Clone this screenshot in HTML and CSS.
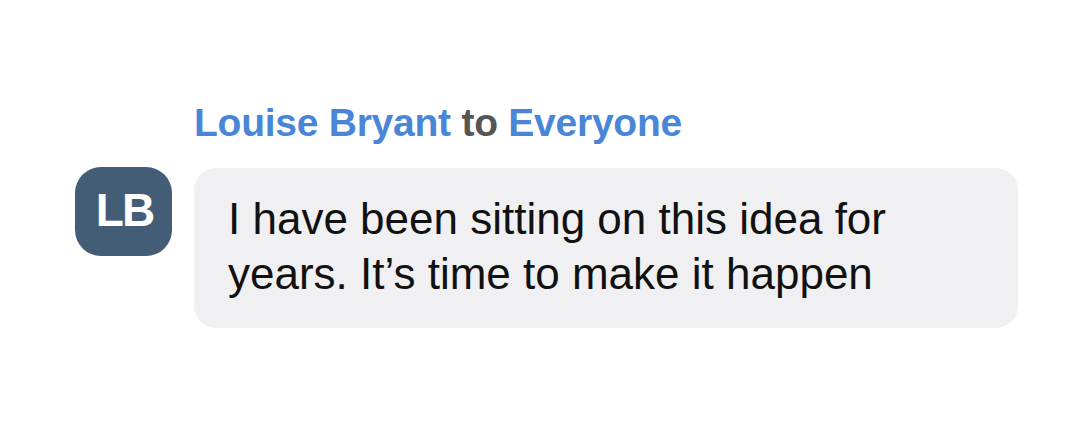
FILE: index.html
```html
<!DOCTYPE html>
<html>
<head>
<meta charset="utf-8">
<link rel="stylesheet" href="styles.css">
</head>
<body>
<div class="chat">
  <div class="header"><span class="name">Louise Bryant</span> <span class="to">to</span> <span class="name">Everyone</span></div>
  <div class="row">
    <div class="avatar"><span class="initials">LB</span></div>
    <div class="bubble">I have been sitting on this idea for<br>years. It’s time to make it happen</div>
  </div>
</div>
</body>
</html>
```

FILE: styles.css
```css
html, body {
  margin: 0;
  padding: 0;
  background: #ffffff;
}
body {
  width: 1080px;
  height: 430px;
  font-family: "Liberation Sans", Arial, sans-serif;
}
.chat {
  padding: 102px 0 0 75px;
}
.header {
  margin-left: 119px;
  font-size: 39px;
  font-weight: bold;
  line-height: 42px;
  color: #4a86d8;
  letter-spacing: -0.25px;
}
.header .to {
  color: #555555;
}
.row {
  display: flex;
  align-items: flex-start;
  gap: 22px;
  margin-top: 24px;
}
.avatar {
  width: 97px;
  height: 89px;
  margin-top: -1px;
  border-radius: 26px;
  background: #435d77;
  color: #ffffff;
  font-weight: bold;
  font-size: 46px;
  letter-spacing: -2px;
  display: flex;
  align-items: center;
  justify-content: center;
}
.initials {
  margin-top: -4px;
  margin-right: -2px;
}
.bubble {
  width: 824px;
  height: 160px;
  box-sizing: border-box;
  background: #f0f0f2;
  border-radius: 22px;
  padding: 23px 34px;
  font-size: 44px;
  line-height: 55px;
  color: #111111;
}
```
